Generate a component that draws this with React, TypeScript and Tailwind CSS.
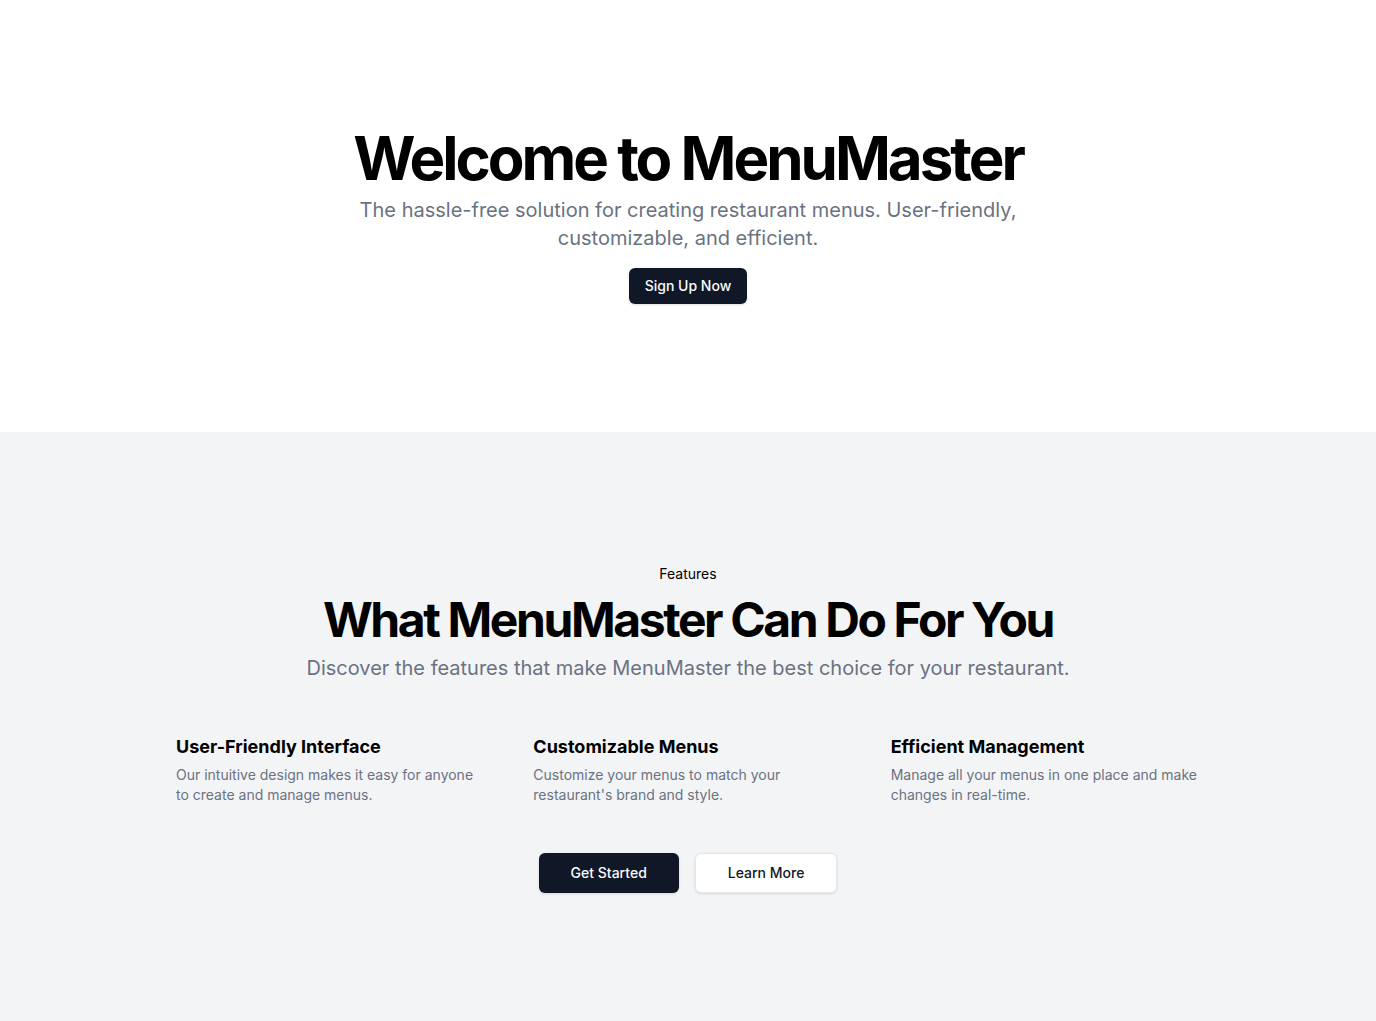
const features = [
  {
    title: "User-Friendly Interface",
    text: "Our intuitive design makes it easy for anyone to create and manage menus.",
  },
  {
    title: "Customizable Menus",
    text: "Customize your menus to match your restaurant's brand and style.",
  },
  {
    title: "Efficient Management",
    text: "Manage all your menus in one place and make changes in real-time.",
  },
];

export default function App() {
  return (
    <main className="flex min-h-screen flex-col font-['Inter',sans-serif] text-black">
      <section className="w-full bg-white py-32">
        <div className="container mx-auto px-6">
          <div className="flex flex-col items-center space-y-4 text-center">
            <div className="space-y-2">
              <h1 className="text-6xl/none font-bold tracking-tighter">Welcome to MenuMaster</h1>
              <p className="mx-auto max-w-[700px] text-xl text-gray-500">
                The hassle-free solution for creating restaurant menus. User-friendly, customizable, and efficient.
              </p>
            </div>
            <button className="inline-flex h-9 items-center justify-center rounded-md bg-gray-900 px-4 py-2 text-sm font-medium text-gray-50 shadow">
              Sign Up Now
            </button>
          </div>
        </div>
      </section>

      <section className="w-full bg-gray-100 py-32">
        <div className="container mx-auto px-6">
          <div className="flex flex-col items-center justify-center space-y-4 text-center">
            <div className="space-y-2">
              <div className="inline-block rounded-lg bg-gray-100 px-3 py-1 text-sm">Features</div>
              <h2 className="text-5xl/none font-bold tracking-tighter">What MenuMaster Can Do For You</h2>
              <p className="mx-auto max-w-[900px] text-xl/relaxed text-gray-500">
                Discover the features that make MenuMaster the best choice for your restaurant.
              </p>
            </div>
          </div>
          <div className="mx-auto grid max-w-5xl grid-cols-3 items-start gap-12 py-12">
            {features.map((f) => (
              <div key={f.title} className="grid gap-1">
                <h3 className="text-lg/7 font-bold">{f.title}</h3>
                <p className="text-sm text-gray-500">{f.text}</p>
              </div>
            ))}
          </div>
          <div className="flex justify-center gap-4">
            <button className="inline-flex h-10 items-center justify-center rounded-md bg-gray-900 px-8 text-sm font-medium text-gray-50 shadow">
              Get Started
            </button>
            <button className="inline-flex h-10 items-center justify-center rounded-md border border-gray-200 bg-white px-8 text-sm font-medium text-gray-900 shadow-sm">
              Learn More
            </button>
          </div>
        </div>
      </section>
    </main>
  );
}
